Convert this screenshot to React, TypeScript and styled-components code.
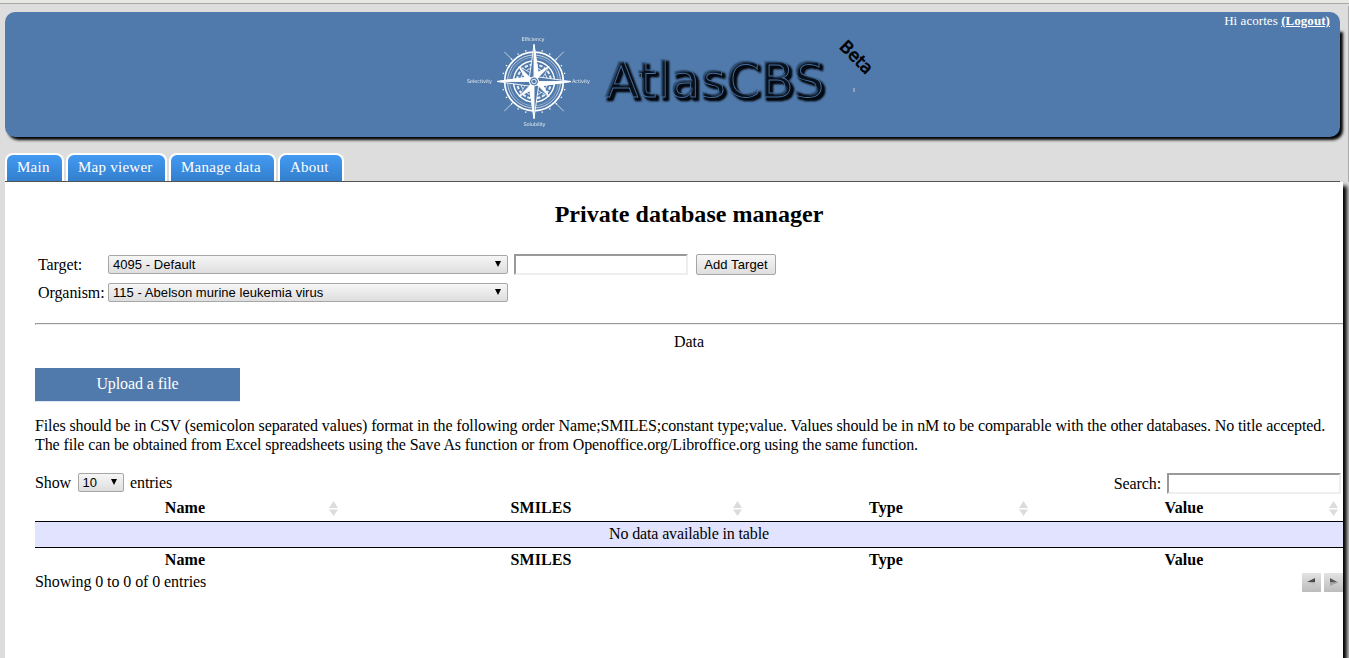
import React from 'react';
import styled, { createGlobalStyle } from 'styled-components';

const Global = createGlobalStyle`
  body { margin: 0; background: #ddd; overflow: hidden; font: 16px/18px "Liberation Serif", serif; color: #000; }
  * { box-sizing: border-box; }
`;
const Page = styled.div`
  height: 658px; overflow: hidden; display: flex; flex-direction: column; position: relative;
`;
const ChromeStrip = styled.div`
  flex: none; height: 4px; background: #e8e7e2; border-bottom: 1px solid #a9a9a7;
`;
const WindowEdge = styled.div`
  position: absolute; right: 0; top: 6px; width: 1px; height: 176px; background: #aaa;
`;
const Header = styled.header`
  flex: none; margin: 8px 9px 0 5px; height: 125px; display: flex; flex-direction: column;
`;
const UserBar = styled.div`
  height: 17px; padding-right: 10px; background: #507aab; color: #fff; text-align: right;
  border-radius: 10px 10px 0 0; font-size: 13px; line-height: 18px; letter-spacing: 0.06px;
`;
const Logout = styled.a`
  font-weight: bold; text-decoration: underline;
`;
const Banner = styled.div`
  flex: 1; background: #507aab; border-radius: 0 0 10px 10px; box-shadow: 3px 3px 3px #000;
  display: flex; justify-content: center;
`;
const Logo = styled.svg`
  display: block; width: 420px; height: 100px; margin-left: 4px;
`;
const Tabs = styled.nav`
  flex: none; display: flex; gap: 2px; height: 45px; padding-top: 16px; margin: 0 9px 0 5px;
  border-bottom: 1px solid #555;
`;
const Tab = styled.a<{ $width: number }>`
  width: ${p => p.$width}px; height: 28px; padding-left: 10px; border: 2px solid #fff; border-bottom: 0;
  border-radius: 8px 8px 0 0; background: linear-gradient(#429af2, #347fcd);
  color: #fff; letter-spacing: 0.25px; font-size: 15px; line-height: 25px; white-space: nowrap;
`;
const Content = styled.main`
  flex: 1; margin: 0 6px 0 5px; padding-left: 30px; background: #fff; box-shadow: 4px 4px 4px #000;
  display: flex; flex-direction: column;
`;
const Title = styled.h2`
  margin: 18px 0 0; font-size: 24px; line-height: 28px; text-align: center; letter-spacing: 0.03px;
`;
const Form = styled.div`
  display: grid; grid-template-columns: 70px 400px 180px auto;
  grid-auto-rows: 28px; align-items: center; justify-content: start; margin-top: 22px; padding-left: 3px;
`;
const Label = styled.label` white-space: nowrap; letter-spacing: -0.08px; padding-top: 1px; `;
const Select = styled.div<{ $width: number }>`
  width: ${p => p.$width}px; height: 19px; padding: 0 6px 0 4px; border: 1px solid #a6a6a6; border-radius: 2px;
  background: linear-gradient(#f6f6f6, #dedede); font: 13px/17px "Liberation Sans", sans-serif;
  display: flex; justify-content: space-between; letter-spacing: 0.05px;
`;
const Arrow = styled.svg` width: 6px; height: 6px; margin-top: 5px; `;
const Input = styled.input`
  width: 174px; height: 21px; border: 2px solid; border-color: #999 #eee #eee #999; padding: 0; background: #fff;
`;
const TargetInput = styled(Input)` margin-left: 6px; `;
const AddButton = styled.button`
  width: 80px; height: 21px; margin-left: 8px; padding: 0; border: 1px solid #a6a6a6; border-radius: 2px;
  background: linear-gradient(#f6f6f6, #dedede); font: 13px/19px "Liberation Sans", sans-serif; color: #000;
  letter-spacing: 0.1px;
`;
const Rule = styled.div`
  height: 2px; margin-top: 17px; border-top: 1px solid #999; border-left: 1px solid #999; border-bottom: 1px solid #eee;
`;
const Caption = styled.div` margin-top: 8px; text-align: center; `;
const Upload = styled.div`
  width: 205px; height: 34px; margin-top: 17px; background: #507aab; border-bottom: 1px solid #dde6f0;
  color: #fff; text-align: center; line-height: 32px; letter-spacing: -0.1px;
`;
const Help = styled.p` margin: 14px 0 0; line-height: 19px; white-space: nowrap; letter-spacing: -0.11px; `;
const Controls = styled.div`
  display: flex; justify-content: space-between; align-items: flex-start; height: 22px; margin-top: 19px; padding-right: 2px;
`;
const Field = styled.div` display: flex; align-items: center; gap: 6px; letter-spacing: -0.1px; `;
const LengthField = styled(Field)` gap: 6.5px; `;
const Table = styled.div` display: flex; flex-direction: column; `;
const Row = styled.div<{ $foot?: boolean }>`
  display: grid; grid-template-columns: 308px 404px 286px 310px; height: ${p => (p.$foot ? 25 : 26)}px;
  padding-top: ${p => (p.$foot ? 3 : 4)}px;
`;
const Cell = styled.div`
  padding-left: 10px; font-weight: bold; display: flex; text-align: center; letter-spacing: 0.1px;
`;
const CellText = styled.span` flex: 1; `;
const SortSlot = styled.span` width: 18px; padding: 2px 0 0 4px; `;
const SortIcon = styled.svg` display: block; width: 9px; height: 15px; `;
const Empty = styled.div`
  height: 27px; border: solid #000; border-width: 1px 0; background: #e2e4ff; text-align: center; line-height: 24px;
  letter-spacing: -0.14px;
`;
const Footer = styled.div` display: flex; justify-content: space-between; letter-spacing: -0.08px; `;
const Pager = styled.div` display: flex; gap: 3px; `;
const PageButton = styled.button`
  width: 19px; height: 19px; padding: 0; border: 0; background: linear-gradient(#e3e3e3, #bcbcbc);
`;
const PageIcon = styled.svg` display: block; width: 19px; height: 19px; `;

const columns = ['Name', 'SMILES', 'Type', 'Value'];
const tabs = [['Main', 59], ['Map viewer', 101], ['Manage data', 107], ['About', 66]] as const;

const Dropdown = ({ width, value }: { width: number; value: string }) => (
  <Select $width={width}>
    <span>{value}</span>
    <Arrow viewBox="0 0 6 6"><path d="M0 0h6L3 6z" /></Arrow>
  </Select>
);

const Compass = () => {
  const ticks = Array.from({ length: 24 }, (_, i) => i * 15);
  return (
    <g transform="translate(534 81.5)" fill="none" stroke="#fff">
      <circle r="29.3" strokeWidth="1.7" />
      <circle r="26.5" strokeWidth=".8" opacity=".85" />
      <circle r="24.3" strokeWidth=".6" opacity=".6" />
      <circle r="20.5" strokeWidth="1.4" />
      <circle r="17" strokeWidth="2" strokeDasharray="3.4 1.6" opacity=".9" />
      <circle r="13.5" strokeWidth=".9" />
      {ticks.map(a => <path key={a} d="M0-31v-1.4" strokeWidth="1.2" transform={`rotate(${a})`} />)}
      {[45, 135, 225, 315].map(a => (
        <g key={a} transform={`rotate(${a})`}>
          <path d="M0-42v13" strokeWidth=".8" opacity=".8" />
          <path d="M0-21L4.5-6L0 0L-4.5-6z" fill="#507aab" strokeWidth=".6" />
          <path d="M0-21L-4.5-6L0 0z" fill="#fff" strokeWidth=".8" />
        </g>
      ))}
      {[0, 90, 180, 270].map(a => (
        <g key={a} transform={`rotate(${a})`}>
          <path d="M0-37L4.5-5L0 0L-4.5-5z" fill="#507aab" strokeWidth=".9" />
          <path d="M0-37L4.5-5L0 0z" fill="#fff" strokeWidth=".9" />
        </g>
      ))}
      <circle r="4.5" fill="#507aab" strokeWidth="1.1" />
      <circle r="2.3" strokeWidth=".9" />
    </g>
  );
};

const AtlasLogo = () => (
  <Logo viewBox="465 29 420 100">
    <defs>
      <filter id="emboss" x="-5%" y="-20%" width="112%" height="150%" colorInterpolationFilters="sRGB">
        <feComponentTransfer in="SourceAlpha"><feFuncA type="linear" slope="4" /></feComponentTransfer>
        <feOffset dx="2.6" dy="3" />
        <feGaussianBlur stdDeviation="1.2" />
        <feColorMatrix values="0 0 0 0 .02  0 0 0 0 .04  0 0 0 0 .07  0 0 0 1.25 0" result="shade" />
        <feMerge><feMergeNode in="shade" /><feMergeNode in="SourceGraphic" /></feMerge>
      </filter>
    </defs>
    <Compass />
    <g fill="#fff" fontFamily="DejaVu Sans" fontSize="5" textAnchor="middle" opacity=".85">
      <text x="533" y="40.5" textLength="23">Efficiency</text>
      <text x="479.5" y="83" textLength="25">Selectivity</text>
      <text x="581" y="83" textLength="18">Activity</text>
      <text x="534.5" y="126" textLength="22">Solubility</text>
    </g>
    <text x="604" y="97" textLength="220" fontFamily="DejaVu Sans" fontSize="50" fill="#0c1a2a" fillOpacity=".4" stroke="#4570a0" strokeWidth=".9" filter="url(#emboss)">AtlasCBS</text>
    <text transform="translate(838.5 47.5) rotate(45)" fontFamily="DejaVu Sans" fontSize="17" stroke="#000" strokeWidth=".7" textLength="39">Beta</text>
    <path d="M854 88v4" stroke="#b5b5b5" strokeWidth="1.4" />
  </Logo>
);

export default function App() {
  return (
    <Page>
      <Global />
      <ChromeStrip />
      <WindowEdge />
      <Header>
        <UserBar>Hi acortes <Logout>(Logout)</Logout></UserBar>
        <Banner><AtlasLogo /></Banner>
      </Header>
      <Tabs>{tabs.map(([name, width]) => <Tab key={name} $width={width}>{name}</Tab>)}</Tabs>
      <Content>
        <Title>Private database manager</Title>
        <Form>
          <Label>Target:</Label>
          <Dropdown width={400} value="4095 - Default" />
          <TargetInput />
          <AddButton>Add Target</AddButton>
          <Label>Organism:</Label>
          <Dropdown width={400} value="115 - Abelson murine leukemia virus" />
        </Form>
        <Rule />
        <Caption>Data</Caption>
        <Upload>Upload a file</Upload>
        <Help>
          Files should be in CSV (semicolon separated values) format in the following order Name;SMILES;constant type;value. Values should be in nM to be comparable with the other databases. No title accepted.<br />
          The file can be obtained from Excel spreadsheets using the Save As function or from Openoffice.org/Libroffice.org using the same function.
        </Help>
        <Controls>
          <LengthField>Show <Dropdown width={46} value="10" /> entries</LengthField>
          <Field>Search: <Input /></Field>
        </Controls>
        <Table>
          <Row>
            {columns.map(c => (
              <Cell key={c}>
                <CellText>{c}</CellText>
                <SortSlot>
                  <SortIcon viewBox="0 0 9 15"><path d="M0 7L4.5 0L9 7zM0 8.5h9L4.5 15z" fill="#dcdcdc" /></SortIcon>
                </SortSlot>
              </Cell>
            ))}
          </Row>
          <Empty>No data available in table</Empty>
          <Row $foot>{columns.map(c => <Cell key={c}><CellText>{c}</CellText><SortSlot /></Cell>)}</Row>
        </Table>
        <Footer>
          <span>Showing 0 to 0 of 0 entries</span>
          <Pager>
            <PageButton><PageIcon viewBox="0 0 19 19"><path d="M5 9L13 5v4.5z" fill="#4a4a4a" /><path d="M5 9.5h8V13z" fill="#c4c4c4" /></PageIcon></PageButton>
            <PageButton><PageIcon viewBox="0 0 19 19"><path d="M6 5L14 9.5H6z" fill="#555" /><path d="M6 9.5h8L6 13z" fill="#a4a4a4" /></PageIcon></PageButton>
          </Pager>
        </Footer>
      </Content>
    </Page>
  );
}
